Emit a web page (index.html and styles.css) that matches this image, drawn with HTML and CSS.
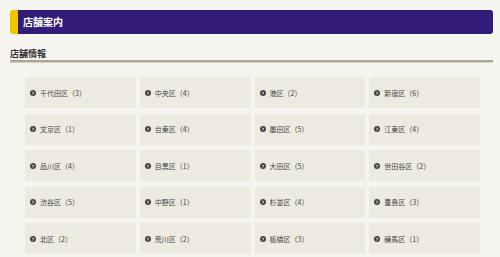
FILE: index.html
```html
<!DOCTYPE html>
<html lang="ja">
<head>
  <meta charset="UTF-8">
  <meta name="viewport" content="width=device-width, initial-scale=1.0">
  <title>店舗案内</title>
  <link rel="stylesheet" href="styles.css">
</head>
<body>

<div class="page">
  <h1 class="page-title">店舗案内</h1>

  <h2 class="section-title">店舗情報</h2>

  <ul class="area-list">
    <li class="area"><a href="#"><svg class="arrow" viewBox="0 0 10 10"><circle cx="5" cy="5" r="5"/><polyline points="4,2.8 6.2,5 4,7.2"/></svg>千代田区（3）</a></li>
    <li class="area"><a href="#"><svg class="arrow" viewBox="0 0 10 10"><circle cx="5" cy="5" r="5"/><polyline points="4,2.8 6.2,5 4,7.2"/></svg>中央区（4）</a></li>
    <li class="area"><a href="#"><svg class="arrow" viewBox="0 0 10 10"><circle cx="5" cy="5" r="5"/><polyline points="4,2.8 6.2,5 4,7.2"/></svg>港区（2）</a></li>
    <li class="area"><a href="#"><svg class="arrow" viewBox="0 0 10 10"><circle cx="5" cy="5" r="5"/><polyline points="4,2.8 6.2,5 4,7.2"/></svg>新宿区（6）</a></li>
    <li class="area"><a href="#"><svg class="arrow" viewBox="0 0 10 10"><circle cx="5" cy="5" r="5"/><polyline points="4,2.8 6.2,5 4,7.2"/></svg>文京区（1）</a></li>
    <li class="area"><a href="#"><svg class="arrow" viewBox="0 0 10 10"><circle cx="5" cy="5" r="5"/><polyline points="4,2.8 6.2,5 4,7.2"/></svg>台東区（4）</a></li>
    <li class="area"><a href="#"><svg class="arrow" viewBox="0 0 10 10"><circle cx="5" cy="5" r="5"/><polyline points="4,2.8 6.2,5 4,7.2"/></svg>墨田区（5）</a></li>
    <li class="area"><a href="#"><svg class="arrow" viewBox="0 0 10 10"><circle cx="5" cy="5" r="5"/><polyline points="4,2.8 6.2,5 4,7.2"/></svg>江東区（4）</a></li>
    <li class="area"><a href="#"><svg class="arrow" viewBox="0 0 10 10"><circle cx="5" cy="5" r="5"/><polyline points="4,2.8 6.2,5 4,7.2"/></svg>品川区（4）</a></li>
    <li class="area"><a href="#"><svg class="arrow" viewBox="0 0 10 10"><circle cx="5" cy="5" r="5"/><polyline points="4,2.8 6.2,5 4,7.2"/></svg>目黒区（1）</a></li>
    <li class="area"><a href="#"><svg class="arrow" viewBox="0 0 10 10"><circle cx="5" cy="5" r="5"/><polyline points="4,2.8 6.2,5 4,7.2"/></svg>大田区（5）</a></li>
    <li class="area"><a href="#"><svg class="arrow" viewBox="0 0 10 10"><circle cx="5" cy="5" r="5"/><polyline points="4,2.8 6.2,5 4,7.2"/></svg>世田谷区（2）</a></li>
    <li class="area"><a href="#"><svg class="arrow" viewBox="0 0 10 10"><circle cx="5" cy="5" r="5"/><polyline points="4,2.8 6.2,5 4,7.2"/></svg>渋谷区（5）</a></li>
    <li class="area"><a href="#"><svg class="arrow" viewBox="0 0 10 10"><circle cx="5" cy="5" r="5"/><polyline points="4,2.8 6.2,5 4,7.2"/></svg>中野区（1）</a></li>
    <li class="area"><a href="#"><svg class="arrow" viewBox="0 0 10 10"><circle cx="5" cy="5" r="5"/><polyline points="4,2.8 6.2,5 4,7.2"/></svg>杉並区（4）</a></li>
    <li class="area"><a href="#"><svg class="arrow" viewBox="0 0 10 10"><circle cx="5" cy="5" r="5"/><polyline points="4,2.8 6.2,5 4,7.2"/></svg>豊島区（3）</a></li>
    <li class="area"><a href="#"><svg class="arrow" viewBox="0 0 10 10"><circle cx="5" cy="5" r="5"/><polyline points="4,2.8 6.2,5 4,7.2"/></svg>北区（2）</a></li>
    <li class="area"><a href="#"><svg class="arrow" viewBox="0 0 10 10"><circle cx="5" cy="5" r="5"/><polyline points="4,2.8 6.2,5 4,7.2"/></svg>荒川区（2）</a></li>
    <li class="area"><a href="#"><svg class="arrow" viewBox="0 0 10 10"><circle cx="5" cy="5" r="5"/><polyline points="4,2.8 6.2,5 4,7.2"/></svg>板橋区（3）</a></li>
    <li class="area"><a href="#"><svg class="arrow" viewBox="0 0 10 10"><circle cx="5" cy="5" r="5"/><polyline points="4,2.8 6.2,5 4,7.2"/></svg>練馬区（1）</a></li>
  </ul>
</div>

</body>
</html>
```

FILE: styles.css
```css
body {
  font-family: "Noto Sans CJK JP", "Noto Sans", sans-serif;
  margin: 0;
  padding: 0;
  background-color: #f6f4ef;
  color: #444;
}

.page {
  padding: 10px 7px 0 10px;
}

.page-title {
  margin: 0;
  height: 24px;
  line-height: 24px;
  padding-left: 5px;
  font-size: 10px;
  font-weight: bold;
  color: #fff;
  background-color: #321b79;
  border-left: 8px solid #f1c400;
  border-radius: 3px;
}

.section-title {
  margin: 14px 0 0 0;
  height: 12px;
  line-height: 12px;
  font-size: 9px;
  font-weight: bold;
  color: #333;
  border-bottom: 2px solid #aaa58e;
  box-shadow: 0 1px 0 #d6d2c3;
}

.area-list {
  list-style: none;
  margin: 15px 0 0 0;
  padding: 0 13px 0 15px;
  display: grid;
  grid-template-columns: repeat(4, 1fr);
  column-gap: 4px;
  row-gap: 5.5px;
}

.area a {
  display: flex;
  align-items: center;
  height: 31px;
  padding-left: 5px;
  background-color: #edeae0;
  color: #444;
  font-size: 7px;
  text-decoration: none;
}

.arrow {
  width: 6px;
  height: 6px;
  margin-right: 4px;
  flex-shrink: 0;
}

.arrow circle {
  fill: #444;
}

.arrow polyline {
  fill: none;
  stroke: #fff;
  stroke-width: 1.6;
}
```
